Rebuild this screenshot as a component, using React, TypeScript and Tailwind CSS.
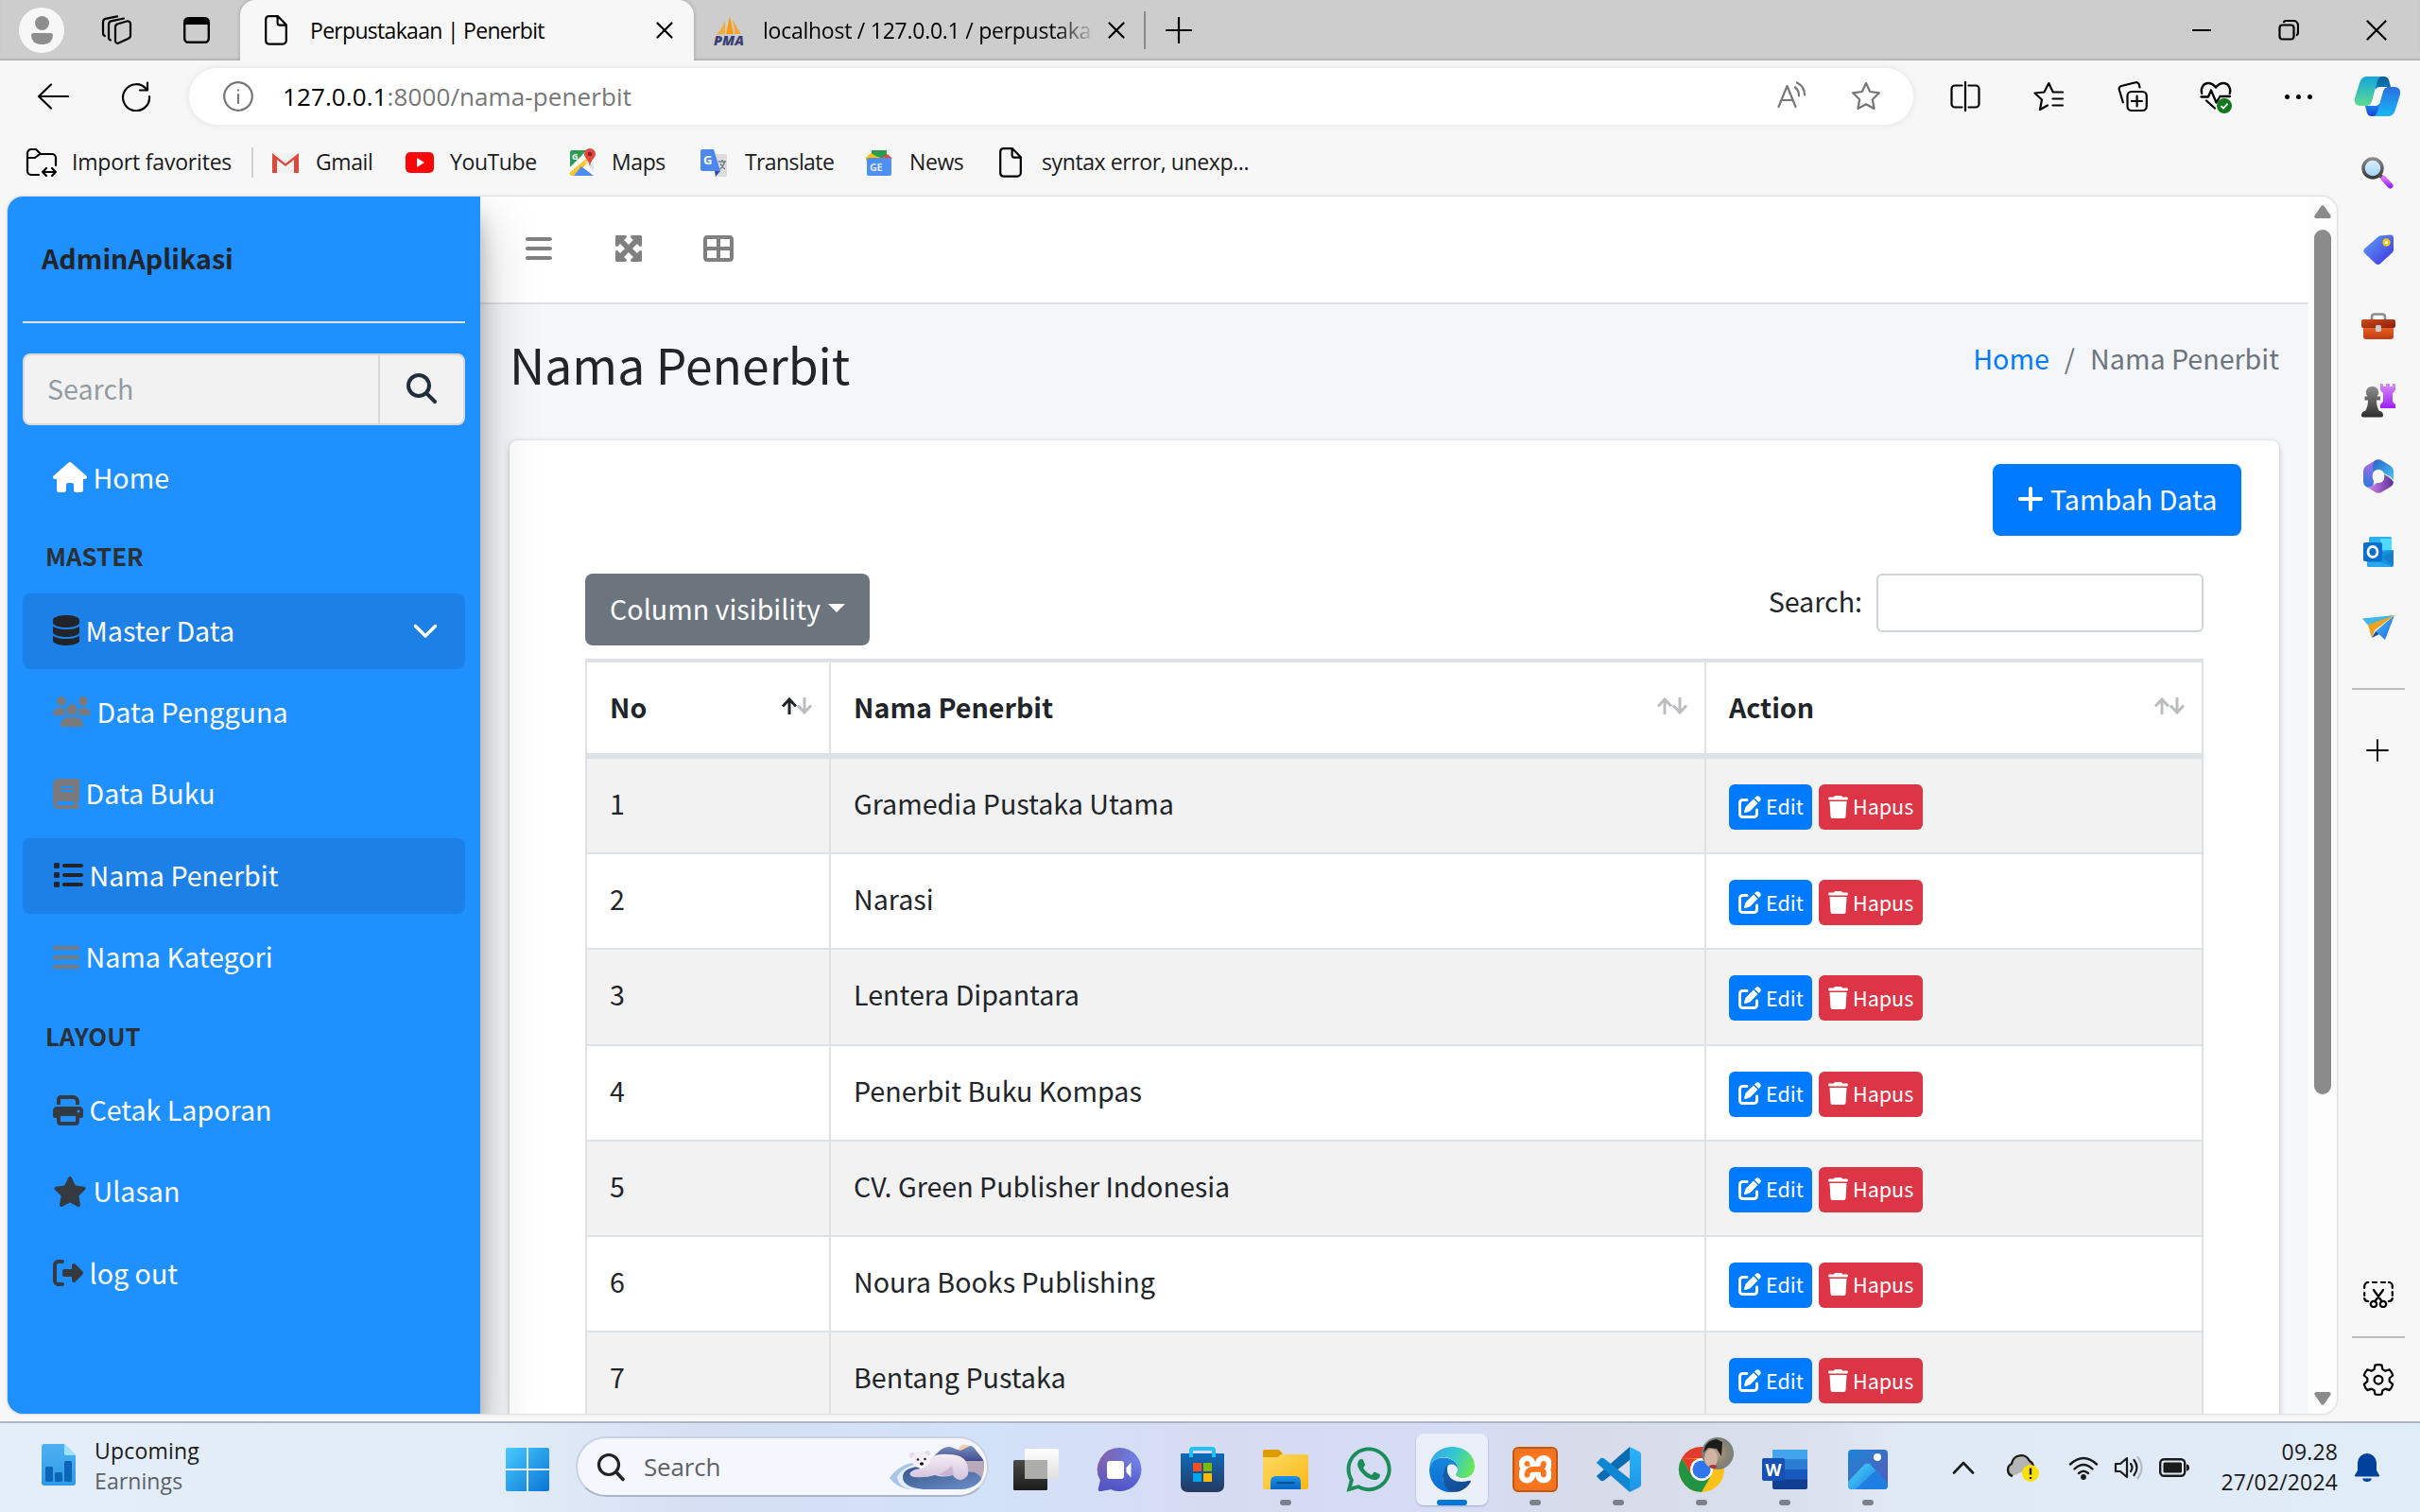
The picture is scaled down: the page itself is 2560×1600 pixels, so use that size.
import React from "react";
import {
  FaHouse,
  FaDatabase,
  FaUsers,
  FaBook,
  FaList,
  FaBars,
  FaPrint,
  FaStar,
  FaRightFromBracket,
  FaChevronDown,
  FaMaximize,
  FaTableCellsLarge,
  FaPenToSquare,
  FaTrash,
  FaPlus,
  FaMagnifyingGlass,
  FaWhatsapp,
} from "react-icons/fa6";
import { SiXampp } from "react-icons/si";

type SvgProps = { className?: string; box?: string; children: React.ReactNode };

function Line({ className = "", box = "0 0 32 32", children }: SvgProps) {
  return (
    <svg viewBox={box} className={"shrink-0 " + className} fill="none" stroke="currentColor" strokeWidth="2.2" strokeLinecap="round" strokeLinejoin="round">
      {children}
    </svg>
  );
}

function Art({ className = "", box = "0 0 32 32", children }: SvgProps) {
  return (
    <svg viewBox={box} className={"shrink-0 overflow-visible " + className}>
      {children}
    </svg>
  );
}

function Grad({ id, from, to, x2 = 0, y2 = 1 }: { id: string; from: string; to: string; x2?: number; y2?: number }) {
  return (
    <linearGradient id={id} x1="0" y1="0" x2={x2} y2={y2}>
      <stop offset="0" stopColor={from} />
      <stop offset="1" stopColor={to} />
    </linearGradient>
  );
}

function DocIcon({ className }: { className: string }) {
  return (
    <Line className={className} box="0 0 24 32">
      <path d="M4 1.2h10l8.800 9V27a3.600 3.600 0 0 1-3.600 3.600H4.600A3.600 3.600 0 0 1 1.200 27V4.600A3.500 3.500 0 0 1 4.600 1.200zM13.600 1.600v6.600a2.400 2.400 0 0 0 2.400 2.400h6.600" />
    </Line>
  );
}

/* ---------- Browser chrome ---------- */

function TabStrip() {
  return (
    <div className="flex h-16 items-stretch bg-[#cdcdcd] text-black shadow-[inset_0_-3px_3px_-2px_rgba(0,0,0,0.22)]">
      <div className="flex w-[254px] items-center">
        <div className="ml-5 flex h-12 w-12 flex-col items-center justify-center gap-[3px] rounded-full bg-[#f7f7f7]">
          <div className="h-[15px] w-[15px] rounded-full bg-[#8e8e8e]" />
          <div className="h-3 w-[23px] rounded-t-[3px] rounded-b-[11px] bg-[#8e8e8e]" />
        </div>
        <Line className="ml-[39px] h-8 w-[34px]" box="0 0 34 32">
          <path d="M17 9.500l10-3a3 3 0 0 1 4 3v12a3.500 3.500 0 0 1-2.500 3.400l-10 4.600a2.400 2.400 0 0 1-3.500-2.200V13a3.600 3.600 0 0 1 2-3.500z" />
          <path d="M10 26.500a3 3 0 0 1-2-3V10a4 4 0 0 1 2.500-3.700L24 3.500" />
          <path d="M4 22a3 3 0 0 1-2-3V7.500a4 4 0 0 1 2.500-3.700L17 1.300" />
        </Line>
        <Art className="ml-[53px] h-7 w-7" box="0 0 28 28">
          <rect x="1.200" y="1.200" width="25.600" height="25.600" rx="4" fill="none" stroke="#000" strokeWidth="2.400" />
          <path d="M1 8V5a4 4 0 0 1 4-4h18a4 4 0 0 1 4 4v3z" fill="#000" />
        </Art>
      </div>
      <div className="flex w-[480px] items-center rounded-t-2xl bg-[#f7f7f7] shadow-[0_0_4px_rgba(0,0,0,0.25)] [clip-path:inset(0_-6px_0_-6px)]">
        <DocIcon className="ml-[26px] h-8 w-6" />
        <span className="ml-6 w-[366px] pb-px text-[23px] leading-8 tracking-[-0.7px] whitespace-nowrap">Perpustakaan | Penerbit</span>
        <Line className="h-[18px] w-[18px]" box="0 0 18 18">
          <path d="M1.500 1.500l15 15M16.500 1.500l-15 15" />
        </Line>
      </div>
      <div className="flex items-center">
        <Art className="ml-[21px] h-8 w-8">
          <path d="M13 20L17 1l4 19z" fill="#f89c0e" />
          <path d="M3 20.500Q9 15 12 6l0 14z" fill="#f8a738" />
          <path d="M22.500 20L20 5q5 9 9 15z" fill="#f4a53c" />
          <text x="0" y="31.500" fontSize="13.500" fontWeight="800" fontStyle="italic" fontFamily="Open Sans, sans-serif" fill="#3b3f74" textLength="32" lengthAdjust="spacingAndGlyphs">
            PMA
          </text>
        </Art>
        <span className="ml-5 w-[352px] pb-px text-[23px] leading-8 tracking-[-0.25px] whitespace-nowrap [mask-image:linear-gradient(to_right,#000_88%,transparent)]">
          localhost / 127.0.0.1 / perpustaka
        </span>
        <Line className="ml-[13px] h-[18px] w-[18px]" box="0 0 18 18">
          <path d="M1.500 1.500l15 15M16.500 1.500l-15 15" />
        </Line>
        <div className="ml-5 h-10 w-[2px] bg-[#8a8a8a]" />
        <Line className="ml-[21px] h-7 w-7" box="0 0 28 28">
          <path d="M14 1v26M1 14h26" />
        </Line>
      </div>
      <div className="ml-auto flex items-center pr-[35px]">
        <div className="h-[2px] w-5 bg-black" />
        <Line className="ml-[71px] h-[22px] w-[22px]" box="0 0 22 22">
          <rect x="1.500" y="5.500" width="15" height="15" rx="3" />
          <path d="M6 2.200C6.600 1.400 7.500 1 8.600 1H16a5 5 0 0 1 5 5v7.500c0 1-.5 2-1.300 2.600" />
        </Line>
        <Line className="ml-[71px] h-[22px] w-[22px]" box="0 0 22 22">
          <path d="M1.500 1.500l19 19M20.500 1.500l-19 19" />
        </Line>
      </div>
    </div>
  );
}

function Copilot() {
  return (
    <Art className="h-[42px] w-12" box="0 0 48 42">
      <defs>
        <Grad id="cpA" from="#12a5dd" to="#5fdb90" />
        <Grad id="cpB" from="#2a6fe0" to="#16b8f5" />
        <Grad id="cpC" from="#0a5f9c" to="#0a78b8" />
        <Grad id="cpD" from="#1a8cf0" to="#1b45d4" />
      </defs>
      <path d="M22 0h9c3 0 4.500 1.500 5.300 4.500L38 11h-8l-8 3z" fill="url(#cpC)" />
      <path d="M26 42h-8c-3 0-4.500-1.500-5.300-4.500L11 31h8l9-3z" fill="url(#cpD)" />
      <path d="M13 0h15c-3 1-4 4-5 8l-4.500 17c-1.200 4.500-3 6-7 6H6c-5 0-7.200-4-5.700-9L5 7c1.600-5 4-7 8-7z" fill="url(#cpA)" />
      <path d="M35 42H20c3-1 4-4 5-8l4.500-17c1.200-4.500 3-6 7-6H42c5 0 7.200 4 5.700 9L43 35c-1.600 5-4 7-8 7z" fill="url(#cpB)" />
      <path d="M18.500 25L22 13.500Q23 11 26 11h10c-4 0-5.500 2-6.500 6L26 28q-1 3-4 3H12c4 0 5.500-1.500 6.500-6z" fill="#f7f7f7" />
    </Art>
  );
}

function Toolbar() {
  return (
    <div className="flex h-[76px] items-center bg-[#f7f7f7] text-black">
      <Line className="ml-[39px] h-7 w-[34px]" box="0 0 34 28">
        <path d="M15 1.500L2 14l13 12.500M2.500 14H33" />
      </Line>
      <Line className="ml-[55px] h-8 w-8">
        <path d="M27 8.500A14 14 0 1 0 30 16M28 1.500v8h-8" />
      </Line>
      <div className="ml-10 flex h-[60px] w-[1824px] items-center rounded-full bg-white shadow-[0_0_8px_rgba(0,0,0,0.09)]">
        <Line className="ml-9 h-8 w-8 text-[#767676]">
          <circle cx="16" cy="16" r="14.800" />
          <path d="M16 14v9M16 9.300v.2" />
        </Line>
        <span className="ml-[31px] pb-px text-[26px] leading-9 tracking-[0.1px] whitespace-nowrap text-black">
          127.0.0.1<span className="text-[#767676]">:8000/nama-penerbit</span>
        </span>
        <div className="ml-auto flex items-center text-[#767676]">
          <Line className="mr-[46px] h-8 w-8">
            <path d="M1.500 27L10.500 5l9 22M4.500 20h12M19 6.500q4 3 4 9M21 1.500q8 4 8 13" />
          </Line>
          <Line className="mr-[34px] h-8 w-8">
            <path d="M16 2l4.200 9 9.800 1.300-7.200 6.900 1.800 9.800L16 24.300 7.400 29l1.800-9.800L2 12.300 11.800 11z" />
          </Line>
        </div>
      </div>
      <Line className="ml-[39px] h-8 w-8">
        <path d="M12.500 4.500H5a3.500 3.500 0 0 0-3.500 3.500v16A3.500 3.500 0 0 0 5 27.500h7.500M19.500 4.500H27a3.500 3.500 0 0 1 3.500 3.500v16a3.500 3.500 0 0 1-3.500 3.500h-7.500M16 1v30" />
      </Line>
      <Line className="ml-14 h-8 w-8">
        <path d="M31 11.500H20.800L16.300 2l-4.800 9.500-10 1L9 19.500 7 30l8-4.500M20.500 18.500H31M20.500 25.500H31" />
      </Line>
      <Line className="ml-[57px] h-8 w-8">
        <rect x="10.500" y="11" width="20.300" height="20" rx="4.500" />
        <path d="M20.600 15.500v11M15 21h11M23.500 6.500l-.7-3a3 3 0 0 0-3.700-2.200L4 5a3 3 0 0 0-2.200 3.700l4 13.600" />
      </Line>
      <Art className="ml-[55px] h-8 w-[34px]" box="0 0 34 32">
        <g fill="none" stroke="#000" strokeWidth="2.300" strokeLinecap="round" strokeLinejoin="round">
          <path d="M2.200 13C.6 8 3.500 2 9 2c3.500 0 6 2 8 4.500C19 4 21.500 2 25 2c5.500 0 8.400 6 6.800 11" />
          <path d="M1.500 16.500H9l3-7 5.500 13 4-6.500h10.500M7 20.500l9 8" />
        </g>
        <circle cx="26" cy="26" r="8" fill="#13781b" />
        <path d="M22.500 26.200l2.500 2.500 4.500-5" fill="none" stroke="#fff" strokeWidth="1.800" />
      </Art>
      <div className="ml-[56px] flex gap-[7px]">
        <div className="h-[5px] w-[5px] rounded-full bg-black" />
        <div className="h-[5px] w-[5px] rounded-full bg-black" />
        <div className="h-[5px] w-[5px] rounded-full bg-black" />
      </div>
      <div className="ml-[45px]">
        <Copilot />
      </div>
    </div>
  );
}

function FavoriteLabel({ children, className }: { children: string; className: string }) {
  return <span className={"pb-[3px] whitespace-nowrap " + className}>{children}</span>;
}

function FavoritesBar() {
  return (
    <div className="flex h-[68px] items-center bg-[#f7f7f7] pb-1 text-[23px] leading-8 tracking-[-0.4px] text-[#1b1b1b]">
      <Line className="ml-[27px] h-8 w-[34px] text-black" box="0 0 34 32">
        <path d="M14 29H6a4 4 0 0 1-4-4V6a4 4 0 0 1 4-4h5l5 5h12a4 4 0 0 1 4 4v8M2 11h8l5-4" />
        <path d="M18 26h14M22 22l-4 4 4 4M28 22l4 4-4 4" />
      </Line>
      <FavoriteLabel className="ml-[15px] w-[190px] tracking-[-0.2px]">Import favorites</FavoriteLabel>
      <div className="h-8 w-[2px] bg-[#d0d0d0]" />
      <Art className="ml-[18px] h-8 w-8">
        <path d="M2 6h28v21H2z" fill="#f1f1f1" />
        <path d="M2 27V6l14 11L30 6v21h-5V13l-9 7-9-7v14z" fill="#dc4a3d" />
      </Art>
      <FavoriteLabel className="ml-4 w-[94px]">Gmail</FavoriteLabel>
      <Art className="h-8 w-8">
        <rect x="1" y="5" width="30" height="22" rx="5" fill="#fb0606" />
        <path d="M13 11v10l8-5z" fill="#fff" />
      </Art>
      <FavoriteLabel className="ml-4 w-[124px]">YouTube</FavoriteLabel>
      <Art className="h-8 w-8">
        <rect x="2" y="3" width="26" height="27" rx="2" fill="#fff" />
        <path d="M4 3h17L3 21V5z" fill="#2c9c55" />
        <path d="M2 27L26 7v5L8 30H4z" fill="#f9c62f" />
        <path d="M15 20L28 30H7z" fill="#4f8df3" />
        <path d="M18 14l10 12v-8z" fill="#dfe1e5" />
        <text x="5" y="13" fontSize="9" fontWeight="700" fontFamily="Open Sans, sans-serif" fill="#fff">G</text>
        <path d="M24 1a6 6 0 0 1 6 6c0 4-5 6-6 13-1-7-6-9-6-13a6 6 0 0 1 6-6z" fill="#e0483b" />
        <circle cx="24" cy="7" r="2.300" fill="#8f2118" />
      </Art>
      <FavoriteLabel className="ml-[15px] w-[93px]">Maps</FavoriteLabel>
      <Art className="h-8 w-8">
        <path d="M13 7h14a2 2 0 0 1 2 2v20a2 2 0 0 1-2 2H20z" fill="#dcdcdc" />
        <path d="M3 2h12l7 23H3a2 2 0 0 1-2-2V4a2 2 0 0 1 2-2z" fill="#4b87ee" />
        <path d="M16 25h6l-5 6z" fill="#3149ab" />
        <text x="4" y="18" fontSize="13" fontWeight="700" fontFamily="Open Sans, sans-serif" fill="#fff">G</text>
        <path d="M20 15h8M24 13v2M26.500 15q-1 5-5 8M22 17q2 4 5 6" fill="none" stroke="#6b7a80" strokeWidth="1.300" />
      </Art>
      <FavoriteLabel className="ml-4 w-[126px] tracking-[-0.6px]">Translate</FavoriteLabel>
      <Art className="h-8 w-8">
        <path d="M8 3h16v9H8z" fill="#2c9c4c" />
        <path d="M2 11l5-5 9 5z" fill="#fbc012" />
        <path d="M2 10h14l3 4H2z" fill="#fbc012" />
        <path d="M30 12l-5-5-9 5z" fill="#e8453c" />
        <rect x="3" y="11" width="26" height="19" rx="2" fill="#4d8ff4" />
        <text x="6" y="25" fontSize="11" fontWeight="700" fontFamily="Open Sans, sans-serif" fill="#dfe9fd">GE</text>
      </Art>
      <FavoriteLabel className="ml-4 w-[95px]">News</FavoriteLabel>
      <DocIcon className="h-8 w-6 text-black" />
      <FavoriteLabel className="ml-[21px]">syntax error, unexp...</FavoriteLabel>
    </div>
  );
}

/* ---------- Application sidebar ---------- */

type NavItem = { label: string; icon: React.ReactNode; active?: boolean; chevron?: boolean };

function NavRow({ label, icon, active, chevron }: NavItem) {
  return (
    <div className={"flex h-20 items-center rounded-lg pl-8 text-white " + (active ? "bg-[#1d80e6]" : "")}>
      {icon}
      <span className="ml-[6.5px] pb-[3px] leading-[48px]">{label}</span>
      {chevron && <FaChevronDown className="mr-[28px] mb-1 ml-auto h-7 w-7" />}
    </div>
  );
}

const masterItems: NavItem[] = [
  { label: "Master Data", icon: <FaDatabase className="mb-0.5 h-8 w-7 text-[#212529]" />, active: true, chevron: true },
  { label: "Data Pengguna", icon: <FaUsers className="mb-0.5 h-8 w-10 text-[#7a7a7c]" /> },
  { label: "Data Buku", icon: <FaBook className="mb-0.5 h-8 w-7 text-[#7a7a7c]" /> },
  { label: "Nama Penerbit", icon: <FaList className="mb-0.5 h-8 w-8 text-[#212529]" />, active: true },
  { label: "Nama Kategori", icon: <FaBars className="mb-0.5 h-8 w-7 text-[#7a7a7c]" /> },
];

const layoutItems: NavItem[] = [
  { label: "Cetak Laporan", icon: <FaPrint className="mb-0.5 h-8 w-8 text-[#343a40]" /> },
  { label: "Ulasan", icon: <FaStar className="mb-0.5 h-8 w-9 text-[#343a40]" /> },
  { label: "log out", icon: <FaRightFromBracket className="mb-0.5 h-8 w-8 text-[#343a40]" /> },
];

function Sidebar() {
  return (
    <aside className="relative z-10 flex w-[500px] shrink-0 flex-col bg-[#1e90ff] px-4 text-[28.65px] shadow-[0_28px_56px_rgba(0,0,0,0.25),0_20px_20px_rgba(0,0,0,0.22)]">
      <div className="flex h-[134px] items-center border-b-2 border-[#dee2e6] pb-0.5 pl-5 font-bold text-[#212529]">AdminAplikasi</div>
      <div className="mt-8 flex h-[76px] rounded-lg border-2 border-[#d6d8da] bg-[#f2f2f2]">
        <div className="flex w-[376px] items-center border-r-2 border-[#d6d8da] pb-0.5 pl-6 text-[#939ba2]">Search</div>
        <div className="flex flex-1 items-center justify-center pb-0.5 text-[#1f2d3d]">
          <FaMagnifyingGlass className="h-8 w-8" />
        </div>
      </div>
      <div className="mt-4">
        <NavRow label="Home" icon={<FaHouse className="mb-0.5 h-8 w-9" />} />
      </div>
      <div className="mt-5 pl-6 text-[25.8px] leading-[44px] font-bold text-[#2a3036]">MASTER</div>
      <div className="mt-[18px] flex flex-col gap-[6.4px]">
        {masterItems.map((item) => (
          <NavRow key={item.label} {...item} />
        ))}
      </div>
      <div className="mt-5 pl-6 text-[25.8px] leading-[44px] font-bold text-[#2a3036]">LAYOUT</div>
      <div className="mt-[18px] flex flex-col gap-[6.4px]">
        {layoutItems.map((item) => (
          <NavRow key={item.label} {...item} />
        ))}
      </div>
    </aside>
  );
}

/* ---------- Main content ---------- */

const publishers = [
  "Gramedia Pustaka Utama",
  "Narasi",
  "Lentera Dipantara",
  "Penerbit Buku Kompas",
  "CV. Green Publisher Indonesia",
  "Noura Books Publishing",
  "Bentang Pustaka",
];

function SortArrows({ active }: { active?: boolean }) {
  return (
    <svg viewBox="0 0 34 20" className="h-5 w-[34px]" fill="none" strokeWidth="3">
      <path d="M9 19V3M2 10.500L9 3l7 7.500" stroke={active ? "#212529" : "#bcbdbf"} />
      <path d="M25 1v16M18 9.500l7 7.500 7-7.500" stroke="#bcbdbf" />
    </svg>
  );
}

function HeadCell({ label, active }: { label: string; active?: boolean }) {
  return (
    <div className="flex items-center justify-between border-r-2 border-[#dee2e6] pr-[17px] pl-6">
      <span className="pb-[3px] leading-[48px]">{label}</span>
      <span className="pb-1">
        <SortArrows active={active} />
      </span>
    </div>
  );
}

function DataTable() {
  return (
    <div className="mt-[14px] w-[1712px] border-t-4 border-l-2 border-[#dee2e6]">
      <div className="grid h-[102px] grid-cols-[258px_926px_526px] border-b-[6px] border-[#dee2e6] font-bold">
        <HeadCell label="No" active />
        <HeadCell label="Nama Penerbit" />
        <HeadCell label="Action" />
      </div>
      {publishers.map((name, i) => (
        <div key={name} className="grid h-[101.2px] grid-cols-[258px_926px_526px] border-b-2 border-[#dee2e6] odd:bg-white even:bg-[#f2f2f2]">
          <div className="border-r-2 border-[#dee2e6] pt-[23px] pl-6 leading-[48px]">{i + 1}</div>
          <div className="border-r-2 border-[#dee2e6] pt-[23px] pl-6 leading-[48px]">{name}</div>
          <div className="flex items-start gap-[7px] border-r-2 border-[#dee2e6] pt-[27px] pl-6 text-[21.5px] text-white">
            <button className="flex h-12 w-[88px] items-center rounded-[6px] bg-[#007bff] pl-[10px]">
              <FaPenToSquare className="mb-px h-6 w-6" />
              <span className="ml-[5px] pb-px">Edit</span>
            </button>
            <button className="flex h-12 w-[110px] items-center rounded-[6px] bg-[#dc3545] pl-[10px]">
              <FaTrash className="mb-px h-6 w-[21px]" />
              <span className="ml-[5px] pb-px">Hapus</span>
            </button>
          </div>
        </div>
      ))}
    </div>
  );
}

function Main() {
  return (
    <main className="flex w-[1934px] flex-col bg-[#f4f6f9] text-[28.65px] text-[#212529]">
      <div className="flex h-[114px] shrink-0 items-center border-b-2 border-[#dee2e6] bg-white pb-0.5 pl-12 text-[#808080]">
        <FaBars className="h-8 w-7" />
        <FaMaximize className="ml-[65px] h-8 w-8" />
        <FaTableCellsLarge className="ml-[63px] h-8 w-8" />
      </div>
      <div className="flex h-[144px] shrink-0 justify-between pr-[31px] pl-[31px]">
        <h1 className="mt-7 text-[51.6px] leading-[69px]">Nama Penerbit</h1>
        <div className="mt-[33px] flex leading-[48px]">
          <span className="text-[#007bff]">Home</span>
          <span className="mx-4 text-[#6c757d]">/</span>
          <span className="text-[#6c757d]">Nama Penerbit</span>
        </div>
      </div>
      <section className="mx-[31px] flex flex-1 flex-col rounded-t-lg bg-white px-20 pt-[25px] shadow-[0_0_2px_rgba(0,0,0,0.125),0_2px_6px_rgba(0,0,0,0.2)]">
        <button className="-mr-10 flex h-[76px] w-[263px] shrink-0 items-center self-end rounded-lg bg-[#007bff] pl-[26px] text-white">
          <FaPlus className="mb-0.5 h-8 w-7" />
          <span className="ml-[7px] pb-0.5 whitespace-nowrap">Tambah Data</span>
        </button>
        <div className="mt-10 flex h-[76px] shrink-0 justify-between">
          <button className="flex w-[301px] items-center rounded-lg bg-[#6c757d] pb-0.5 pl-[26px] whitespace-nowrap text-white">
            Column visibility
            <span className="mb-px ml-2 border-x-[9px] border-t-[9px] border-x-transparent border-t-white" />
          </button>
          <label className="flex h-[62px] items-center">
            <span className="pb-[3px]">Search:</span>
            <span className="ml-[15px] h-[62px] w-[346px] rounded-[6px] border-2 border-[#ced4da] bg-white" />
          </label>
        </div>
        <DataTable />
      </section>
    </main>
  );
}

function ScrollBar() {
  return (
    <div className="flex w-[30px] flex-col items-center bg-[#fcfcfc]">
      <svg viewBox="0 0 18 14" className="mt-[9px] h-[14px] w-[18px]">
        <path d="M7.500 1q1.500-1.600 3 0l7 10q.8 2.500-1.500 3H2q-2.300-.5-1.500-3z" fill="#8b8b8b" />
      </svg>
      <div className="mt-3 h-[915px] w-[18px] rounded-full bg-[#8b8b8b]" />
      <svg viewBox="0 0 18 14" className="mt-auto mb-[9px] h-[14px] w-[18px]">
        <path d="M7.500 13q1.500 1.600 3 0l7-10Q18.300.5 16 0H2Q-.3.500.500 3z" fill="#8b8b8b" />
      </svg>
    </div>
  );
}

/* ---------- Edge sidebar ---------- */

function EdgeRail() {
  return (
    <div className="flex w-[88px] flex-col items-center">
      <Art className="-mt-[42px] mr-[2px] h-[34px] w-[34px]" box="0 0 34 34">
        <defs>
          <Grad id="mgG" from="#dff2ff" to="#9bd2f4" />
          <Grad id="mgH" from="#e36bf7" to="#9a2bf0" />
          <Grad id="mgR" from="#8a8a8a" to="#3c3c3c" />
        </defs>
        <path d="M20 20l5 4" stroke="#4a4a4a" strokeWidth="4" />
        <path d="M23.500 23l7 7.500" stroke="url(#mgH)" strokeWidth="6" strokeLinecap="round" />
        <circle cx="12" cy="12" r="10" fill="url(#mgG)" stroke="url(#mgR)" strokeWidth="3.500" />
      </Art>
      <Art className="mt-[48px] h-[32px] w-8">
        <defs>
          <Grad id="tgA" from="#62a6f8" to="#3a2ee0" x2={1} />
        </defs>
        <path d="M17 1.500L28.500.5Q32 .5 32 4v12q0 2-1.500 3.500L18 31q-2.500 2-5 0L1.500 20q-2.500-2.500 0-5z" fill="url(#tgA)" />
        <circle cx="24.500" cy="8.500" r="3" fill="#fff" stroke="#f6c600" strokeWidth="2.400" />
      </Art>
      <Art className="mt-[51px] h-7 w-9" box="0 0 36 28">
        <defs>
          <Grad id="tbA" from="#c94c1c" to="#8d1d0a" x2={1} />
          <Grad id="tbB" from="#ee6a26" to="#c03a14" />
        </defs>
        <path d="M11 8V4.500Q11 1.500 14 1.500h8q3 0 3 3V8" fill="none" stroke="#8c8c8c" strokeWidth="2.600" />
        <path d="M2 13h32v12q0 3-3 3H5q-3 0-3-3z" fill="url(#tbB)" />
        <path d="M2 7h32q2 0 2 2v5q0 2-2 2H2q-2 0-2-2V9q0-2 2-2z" fill="url(#tbA)" />
        <rect x="15" y="13" width="6" height="7" rx="1.500" fill="#c8cdd2" />
      </Art>
      <Art className="mt-[47px] h-9 w-9" box="0 0 36 36">
        <defs>
          <Grad id="chA" from="#8c8c8c" to="#2e2e2e" />
          <Grad id="chB" from="#d68bf8" to="#a01ef5" />
        </defs>
        <path d="M20 0h3v3h3V0h4v3h3V0h3v7l-3 3v9l3 3v4H20v-4l3-3v-9l-3-3z" fill="url(#chB)" />
        <path d="M11.500 3a6.300 6.300 0 0 1 5 10.500H20v4h-4c0 6 1.500 9 3 11.500h1q3 1 3 4.500 0 2-2 2H2q-2 0-2-2 0-3.500 3-4.500h1c1.500-2.500 3-5.500 3-11.500H3.500v-4h3A6.300 6.300 0 0 1 11.500 3z" fill="url(#chA)" />
      </Art>
      <Art className="mt-11 h-9 w-8" box="0 0 32 36">
        <defs>
          <Grad id="msA" from="#b06be0" to="#2a7be0" />
          <Grad id="msB" from="#2760c8" to="#46cdf5" x2={1} />
          <Grad id="msC" from="#d58af0" to="#5b2f95" x2={1} y2={0} />
        </defs>
        <path d="M13 1L3 7Q0 9 0 12v12q0 3 3 5l2 1q6 0 6-6V10q0-6 5-9.500z" fill="url(#msA)" />
        <path d="M13 1q3-1.600 6 0l10 6q3 2 3 5v12q0-4-5-6.500L16 12l-6 4V8q0-5 3-7z" fill="url(#msB)" />
        <path d="M22 16q6 2.500 10 8 0 3-3 5l-10 6q-3 1.600-6 0L4 29.500q5 0 8-3l4-2.500q6-2 6-8z" fill="url(#msC)" />
        <path d="M16 10.800q6.300.5 6.300 7.200T16 25q-6.300-.4-6.300-7T16 10.800z" fill="#f7f7f7" />
      </Art>
      <Art className="mt-[46px] h-8 w-8">
        <rect x="6" y="0" width="24" height="20" rx="1.500" fill="#2fb0ee" />
        <path d="M18 2h12v12H18z" fill="#50d9ff" />
        <path d="M4 18l28-4v16q0 2-2 2H6q-2 0-2-2z" fill="#1490df" />
        <path d="M20 22l12-7v15z" fill="#1a7fcb" />
        <path d="M4 27h14l14 5H6q-2 0-2-2z" fill="#28a8ea" />
        <rect x="0" y="6" width="20" height="20" rx="2" fill="#0a6fcc" />
        <ellipse cx="10" cy="16" rx="5" ry="5.500" fill="none" stroke="#fff" strokeWidth="2.800" />
      </Art>
      <Art className="mt-[51px] h-[26px] w-[34px]" box="0 0 34 26">
        <defs>
          <Grad id="plA" from="#46c3f0" to="#1f63e6" x2={1} />
        </defs>
        <path d="M0 3.500L34 0 8 13z" fill="#3cb8ee" />
        <path d="M34 0L24 26 14 17z" fill="url(#plA)" />
        <path d="M6 10L34 0 13 16l-3 8z" fill="#eda31b" />
        <path d="M10 24l4-7 4 3z" fill="#20509c" />
      </Art>
      <div className="mt-[51px] h-[2px] w-14 bg-[#bdbdbd]" />
      <Line className="mt-[52px] mr-[2px] h-6 w-6 text-black" box="0 0 24 24">
        <path d="M12 1v22M1 12h22" strokeWidth="1.800" />
      </Line>
      <Line className="mt-auto h-7 w-8 text-black" box="0 0 32 28">
        <path d="M1.200 15v-3M1.200 7V5a4 4 0 0 1 4-4M10 1h4M19 1h4M27 1a4 4 0 0 1 3.800 4v2M30.800 11v4M30.800 18q-.5 3-4 3M1.200 18q.5 3 4 3M11 9l8.500 12M21 9l-8.500 12" />
        <circle cx="11" cy="24" r="3.200" />
        <circle cx="21" cy="24" r="3.200" />
      </Line>
      <div className="mt-[30px] h-[2px] w-14 bg-[#bdbdbd]" />
      <Line className="mt-[27px] mb-[27px] h-[34px] w-[34px] text-black" box="0 0 34 34">
        <path d="M13.500 1.500q3.500-.8 7 0l.9 4.600 3 1.700 4.300-1.500q2.500 2.700 3.500 6.200l-3.500 3v3.400l3.500 3q-1 3.500-3.500 6.200l-4.300-1.500-3 1.700-.9 4.200q-3.500.8-7 0l-.9-4.200-3-1.700-4.300 1.500q-2.500-2.700-3.500-6.200l3.500-3v-3.400l-3.500-3q1-3.500 3.500-6.200l4.300 1.500 3-1.700z" />
        <circle cx="17" cy="17.200" r="4.400" />
      </Line>
    </div>
  );
}

/* ---------- Windows taskbar ---------- */

function AppSlot({ children, active, running }: { children: React.ReactNode; active?: boolean; running?: boolean }) {
  return (
    <div className="flex w-[88px] items-center justify-center">
      <div className={"relative flex h-[76px] w-[76px] items-center justify-center rounded-lg " + (active ? "bg-[#ebeff9] shadow-[0_1px_2px_rgba(60,80,130,0.35)]" : "")}>
        {children}
        {active && <div className="absolute bottom-0 left-[22px] h-[6px] w-8 rounded-full bg-[#0078d7]" />}
        {running && <div className="absolute bottom-0 left-8 h-[6px] w-3 rounded-full bg-[#7d818b]" />}
      </div>
    </div>
  );
}

function BearPicture() {
  return (
    <Art className="h-12 w-[102px]" box="0 0 102 48">
      <defs>
        <Grad id="brM" from="#7c92bd" to="#36408a" />
        <Grad id="brW" from="#35568c" to="#6f8fc8" x2={1} />
        <Grad id="brB" from="#f6edf7" to="#d3c2dc" />
        <clipPath id="brC">
          <path d="M0 0h76q24 2 24 24t-24 24H0z" />
        </clipPath>
      </defs>
      <path d="M0 36Q10 21 30 19L40 48H20Q6 45 0 36z" fill="#a9c6e8" />
      <path d="M8 35Q14 23 36 20v28H22Q9 45 8 35z" fill="#e3eefa" />
      <g clipPath="url(#brC)">
        <circle cx="80" cy="7" r="7" fill="#f8cfa8" />
        <path d="M46 14q4-4 7-7 8-6 14-3 4 2 8 3l12-6 14 18v2H46z" fill="url(#brM)" />
        <path d="M70 18h32v30H70z" fill="#b9a9ba" />
        <path d="M14 35q0-9 16-11l60 6q14 8 8 18H36q-22-2-22-13z" fill="url(#brW)" />
      </g>
      <path d="M44 14q8-4 18-3 20 0 21 15 1 7-2 9-4 5-10 2-3-2-4-4-10 3-19 0-9 3-22 2-6-1-4-5 3-3 10-4 10 0 12-12z" fill="url(#brB)" />
      <path d="M52 32q8-3 14-9 2 6 1 10-7 2-15-1z" fill="#b9a4c6" opacity="0.600" />
      <circle cx="24" cy="12" r="3" fill="#e6d8e8" />
      <circle cx="40" cy="10" r="3" fill="#e6d8e8" />
      <ellipse cx="33" cy="17" rx="9.500" ry="8.500" fill="#f7eff7" />
      <ellipse cx="34" cy="22" rx="4.500" ry="4" fill="#fff" />
      <circle cx="30" cy="16.500" r="1.300" fill="#2a2230" />
      <circle cx="37.500" cy="16" r="1.300" fill="#2a2230" />
      <ellipse cx="34" cy="21" rx="2.200" ry="1.700" fill="#1b1520" />
    </Art>
  );
}

function Taskbar() {
  return (
    <div className="flex h-24 items-stretch border-t-2 border-[#adb4c4] bg-[linear-gradient(to_right,#e3eef8_0%,#e1ecf7_21%,#d6dff3_29%,#d2e2f9_41%,#d7dbf2_50%,#d5dcf5_60%,#d7dbea_65%,#dadfed_74%,#e0eaf6_79%,#e0ecf7_100%)] text-[23px] text-[#1b1b1b]">
      <div className="flex w-[514px] items-start">
        <Art className="mt-[22px] ml-11 h-11 w-9" box="0 0 36 44">
          <defs>
            <Grad id="wdA" from="#4fb0f2" to="#2f9be8" />
          </defs>
          <path d="M3 0h21l12 12v29q0 3-3 3H3q-3 0-3-3V3q0-3 3-3z" fill="url(#wdA)" />
          <path d="M24 0l12 12H26q-2 0-2-2z" fill="#9fe0ff" />
          <rect x="4" y="24" width="8" height="16" rx="1.500" fill="#0c66b8" />
          <rect x="14" y="30" width="8" height="10" rx="1.500" fill="#0c66b8" />
          <rect x="24" y="18" width="8" height="22" rx="1.500" fill="#0c66b8" />
        </Art>
        <div className="mt-[13px] ml-5 flex flex-col leading-8">
          <span className="tracking-[0.2px]">Upcoming</span>
          <span className="tracking-[0.1px] text-[#5d6066]">Earnings</span>
        </div>
      </div>
      <AppSlot>
        <Art className="mt-[3px] h-[46px] w-[46px]" box="0 0 46 46">
          <defs>
            <Grad id="wnA" from="#48cbff" to="#0a74d4" x2={1} />
          </defs>
          <path d="M2 0h20v22H0V2q0-2 2-2zM24 0h20q2 0 2 2v20H24zM0 24h22v22H2q-2 0-2-2zM24 24h22v20q0 2-2 2H24z" fill="url(#wnA)" />
        </Art>
      </AppSlot>
      <div className="mt-[14px] ml-[7px] flex h-16 w-[437px] items-center rounded-full border-2 border-[#c9d2e4] border-b-[#abb4ca] bg-[#f4f7fd]">
        <Art className="ml-5 h-[30px] w-[30px]" box="0 0 30 30">
          <circle cx="13" cy="13" r="10.500" fill="none" stroke="#222" strokeWidth="3.200" />
          <path d="M21 21l7 7.500" stroke="#222" strokeWidth="3.600" strokeLinecap="round" />
        </Art>
        <span className="ml-5 text-[26px] leading-8 tracking-[-0.2px] text-[#5f6166]">Search</span>
        <div className="mr-px ml-auto">
          <BearPicture />
        </div>
      </div>
      <div className="ml-[6px] flex items-center pt-[3px]">
        <AppSlot>
          <Art className="h-11 w-12" box="0 0 48 44">
            <defs>
              <Grad id="tvA" from="#4a4a48" to="#1c1c1c" />
              <Grad id="tvB" from="#ffffff" to="#dfdfdf" />
            </defs>
            <rect x="12" y="0" width="36" height="32" rx="1.500" fill="url(#tvB)" />
            <rect x="0" y="12" width="36" height="32" rx="1.500" fill="url(#tvA)" />
            <rect x="12" y="12" width="24" height="20" fill="#adadab" />
          </Art>
        </AppSlot>
        <AppSlot>
          <Art className="h-[46px] w-[46px]" box="0 0 46 46">
            <defs>
              <linearGradient id="ctA" x1="0" y1="0" x2="1" y2="0.300">
                <stop offset="0" stopColor="#8b5fa4" />
                <stop offset="0.500" stopColor="#6f6fc8" />
                <stop offset="1" stopColor="#6f86ea" />
              </linearGradient>
              <linearGradient id="ctB" x1="0" y1="0" x2="0" y2="1">
                <stop offset="0.300" stopColor="#5050c8" stopOpacity="0" />
                <stop offset="1" stopColor="#5052c6" />
              </linearGradient>
            </defs>
            <path d="M23 0a23 23 0 1 1-9 44L3 46Q0 46 1 43l2-8.500A23 23 0 0 1 23 0z" fill="url(#ctA)" />
            <path d="M23 0a23 23 0 1 1-9 44L3 46Q0 46 1 43l2-8.500A23 23 0 0 1 23 0z" fill="url(#ctB)" />
            <rect x="10" y="14" width="18" height="19" rx="3" fill="#fff" />
            <path d="M30.500 21l5-5.500v16l-5-5.500z" fill="#fff" />
          </Art>
        </AppSlot>
        <AppSlot>
          <Art className="h-12 w-[46px]" box="0 0 46 48">
            <defs>
              <Grad id="stA" from="#0d6cbc" to="#26385f" />
            </defs>
            <path d="M1 7h44q1 0 1 1v32q0 8-8 8H8q-8 0-8-8V8q0-1 1-1z" fill="url(#stA)" />
            <path d="M11 11V4q0-2 2-2h20q2 0 2 2v7" fill="none" stroke="#22c1fa" strokeWidth="4" />
            <path d="M13 17h9v9h-9z" fill="#f25022" />
            <path d="M24 17h9v9h-9z" fill="#7fba00" />
            <path d="M13 28h9v9h-9z" fill="#00a4ef" />
            <path d="M24 28h9v9h-9z" fill="#ffb900" />
          </Art>
        </AppSlot>
        <AppSlot running>
          <Art className="h-[42px] w-12" box="0 0 48 42">
            <defs>
              <Grad id="exA" from="#ffda63" to="#f9b815" x2={1} />
              <Grad id="exB" from="#1a93e6" to="#0768c4" />
            </defs>
            <path d="M0 2q0-2 2-2h13q3 0 4 2l2 3H0z" fill="#dd9c00" />
            <path d="M0 5h46q2 0 2 2v33q0 2-2 2H2q-2 0-2-2z" fill="url(#exA)" />
            <path d="M0 4h20l-3 3q-1 1-3 1H0z" fill="#dd9c00" />
            <path d="M8 42v-8q0-6 6-6h20q6 0 6 6v8z" fill="url(#exB)" />
            <rect x="14" y="34" width="20" height="2.200" rx="1" fill="#0a4f96" />
          </Art>
        </AppSlot>
        <AppSlot>
          <FaWhatsapp className="h-[54px] w-[54px] text-[#1c8c58]" />
        </AppSlot>
        <AppSlot active>
          <Art className="h-12 w-12" box="0 0 48 48">
            <defs>
              <linearGradient id="edA" x1="0" y1="0.300" x2="1" y2="0.600">
                <stop offset="0" stopColor="#31a9ef" />
                <stop offset="0.500" stopColor="#35c8cf" />
                <stop offset="1" stopColor="#6be853" />
              </linearGradient>
              <Grad id="edB" from="#1687dc" to="#0a6ed6" />
              <Grad id="edC" from="#1565b0" to="#12458a" x2={1} />
            </defs>
            <path d="M0 24C0 9 11 0 24 0c14 0 24 9 24 21 0 7-5 12-12 12-5 0-8-2-8-4 0-1 2-2 2-5 0-5-5-13-15-13C6 11 0 18 0 24z" fill="url(#edA)" />
            <path d="M0 24C1 16 7 11.500 15 11.500c9 0 15 6 15 12C29 20 26 18.500 24 18.500c-6 0-10 6-10 13 0 8 5 14.500 14 16-16 3-28-8-28-23.500z" fill="url(#edB)" />
            <path d="M14 31c0-6 3-11 6-12-3 6 0 18 14 18 5 0 8-2 10-1q0 2-3 5c-4 4-8 7-15 6.800C19 47.500 14 40 14 31z" fill="url(#edC)" />
          </Art>
        </AppSlot>
        <AppSlot running>
          <div className="flex h-12 w-12 items-center justify-center rounded-md border-2 border-[#c4570f] bg-[#f4731e]">
            <div className="flex h-[34px] w-[34px] items-center justify-center overflow-hidden bg-white">
              <SiXampp className="h-12 w-12 shrink-0 text-[#f9771f]" />
            </div>
          </div>
        </AppSlot>
        <AppSlot running>
          <Art className="h-12 w-12" box="0 0 48 48">
            <defs>
              <Grad id="vsA" from="#2cb4f7" to="#1c93e6" />
            </defs>
            <path d="M.8 31l4.200 4.500q1.800 1.500 4 0L36 14V0z" fill="#0b6cb3" />
            <path d="M.8 17l4.200-4.500q1.800-1.500 4 0L36 34v14z" fill="#0f87d2" />
            <path d="M36 0l10 5q2 1 2 3v32q0 2-2 3l-10 5z" fill="url(#vsA)" />
          </Art>
        </AppSlot>
        <AppSlot running>
          <Art className="h-12 w-12" box="0 0 48 48">
            <defs>
              <radialGradient id="phA" cx="0.500" cy="0.500" r="0.600">
                <stop offset="0" stopColor="#b3a08c" />
                <stop offset="0.450" stopColor="#8e8672" />
                <stop offset="1" stopColor="#6f7c7c" />
              </radialGradient>
              <clipPath id="phC">
                <circle cx="41" cy="7" r="17" />
              </clipPath>
            </defs>
            <circle cx="24" cy="24" r="24" fill="#fbc116" />
            <path d="M3.200 12A24 24 0 0 1 44.800 12H24z" fill="#e33b2e" />
            <path d="M3.200 12A24 24 0 0 0 24 48L34.400 30H24L13.600 30z" fill="#229342" />
            <path d="M3.200 12L13.600 30 24 13z" fill="#e33b2e" />
            <circle cx="24" cy="24" r="12" fill="#fff" />
            <circle cx="24" cy="24" r="9.500" fill="#2f76ee" />
            <circle cx="41" cy="7" r="17" fill="url(#phA)" />
            <g clipPath="url(#phC)">
              <ellipse cx="34" cy="12" rx="7" ry="10" fill="#d3b3a4" />
              <path d="M26 6q2-13 14-14l6 3-1 15-5-8-9-1z" fill="#1d1a1a" />
              <ellipse cx="36" cy="21" rx="4" ry="2" fill="#b0333c" />
            </g>
          </Art>
        </AppSlot>
        <AppSlot running>
          <Art className="h-[42px] w-12" box="0 0 48 42">
            <rect x="11" y="0" width="37" height="42" rx="2" fill="#103f91" />
            <path d="M11 21h37v10.500H11z" fill="#185abd" />
            <path d="M11 10.500h37V21H11z" fill="#2b7cd3" />
            <path d="M13 0h33q2 0 2 2v8.500H11V2q0-2 2-2z" fill="#41a5ee" />
            <rect x="0" y="9" width="24" height="24" rx="2" fill="#1650b5" />
            <text x="3.500" y="27.500" fontSize="18" fontWeight="700" fontFamily="Open Sans, sans-serif" fill="#fff" textLength="17" lengthAdjust="spacingAndGlyphs">
              W
            </text>
          </Art>
        </AppSlot>
        <AppSlot running>
          <Art className="h-[42px] w-[42px]" box="0 0 42 42">
            <defs>
              <Grad id="ptA" from="#1a86d6" to="#5a58b8" x2={1} />
              <Grad id="ptB" from="#4fe0ff" to="#1a78dc" x2={1} />
              <clipPath id="ptC">
                <rect width="42" height="42" rx="4" />
              </clipPath>
            </defs>
            <g clipPath="url(#ptC)">
              <rect width="42" height="42" fill="url(#ptA)" />
              <path d="M-2 36L17 16q4-3 7 0l6 7-20 22H-2z" fill="url(#ptB)" />
              <path d="M8 42l19-18q3-2 6 0l14 18z" fill="#1f7fe0" />
            </g>
            <circle cx="31" cy="8" r="4" fill="#fff" />
          </Art>
        </AppSlot>
      </div>
      <div className="ml-auto flex items-center pr-[42px]">
        <Line className="h-[14px] w-6" box="0 0 24 14">
          <path d="M2 12.500L12 2l10 10.500" strokeWidth="2.600" />
        </Line>
        <Art className="ml-[33px] h-8 w-9" box="0 0 36 32">
          <path d="M7 25a7 7 0 0 1-1-13 10 10 0 0 1 19-3 8 8 0 0 1 4 6" fill="#b5b5b5" stroke="#1b1b1b" strokeWidth="2.400" />
          <circle cx="26" cy="22" r="9" fill="#fbe000" />
          <path d="M26 16.500v7M26 26v2" stroke="#1b1b1b" strokeWidth="2.400" />
        </Art>
        <Line className="ml-[30px] h-8 w-8">
          <path d="M2 12.500q14-13 28 0M6.500 17.500q9.500-9 19 0M11 22q5-4.500 10 0" strokeWidth="2.400" />
          <circle cx="16" cy="26" r="1.800" fill="currentColor" />
        </Line>
        <Line className="ml-[16px] h-8 w-8">
          <path d="M2 12v8h5l7 6V6l-7 6zM18 12q3 4 0 8M21.500 8q6 8 0 16" />
          <path d="M25.500 5q8 11 0 22" stroke="#b4bbc6" />
        </Line>
        <Art className="ml-[16px] h-5 w-8" box="0 0 32 20">
          <rect x="1.200" y="1.200" width="26" height="17.600" rx="4" fill="none" stroke="#1b1b1b" strokeWidth="2.400" />
          <rect x="4.500" y="4.500" width="19.500" height="11" rx="1.500" fill="#1b1b1b" />
          <path d="M29 6.500q3 0 3 3.500t-3 3.500z" fill="#1b1b1b" />
        </Art>
        <div className="ml-[33px] w-[124px] pb-[3px] text-right leading-8 tracking-[0.15px] whitespace-nowrap">
          <div>09.28</div>
          <div>27/02/2024</div>
        </div>
        <Art className="ml-[17px] h-[30px] w-[28px]" box="0 0 28 30">
          <path d="M14 0a10 10 0 0 1 10 10v8l3 5q.5 1.500-1 1.500H2Q.5 24.500 1 23l3-5v-8A10 10 0 0 1 14 0zM9 26.500h10q-1 3.500-5 3.500t-5-3.500z" fill="#00429b" />
        </Art>
      </div>
    </div>
  );
}

export default function App() {
  return (
    <div className="flex h-[1600px] w-[2560px] flex-col overflow-hidden bg-[#f7f7f7] font-['Open_Sans',sans-serif]">
      <TabStrip />
      <Toolbar />
      <FavoritesBar />
      <div className="flex h-[1296px] shrink-0">
        <div className="ml-2 flex h-[1288px] w-[2464px] overflow-hidden rounded-2xl font-['Noto_Sans_CJK_SC',sans-serif] shadow-[0_0_3px_rgba(0,0,0,0.28)]">
          <Sidebar />
          <Main />
          <ScrollBar />
        </div>
        <EdgeRail />
      </div>
      <Taskbar />
    </div>
  );
}
